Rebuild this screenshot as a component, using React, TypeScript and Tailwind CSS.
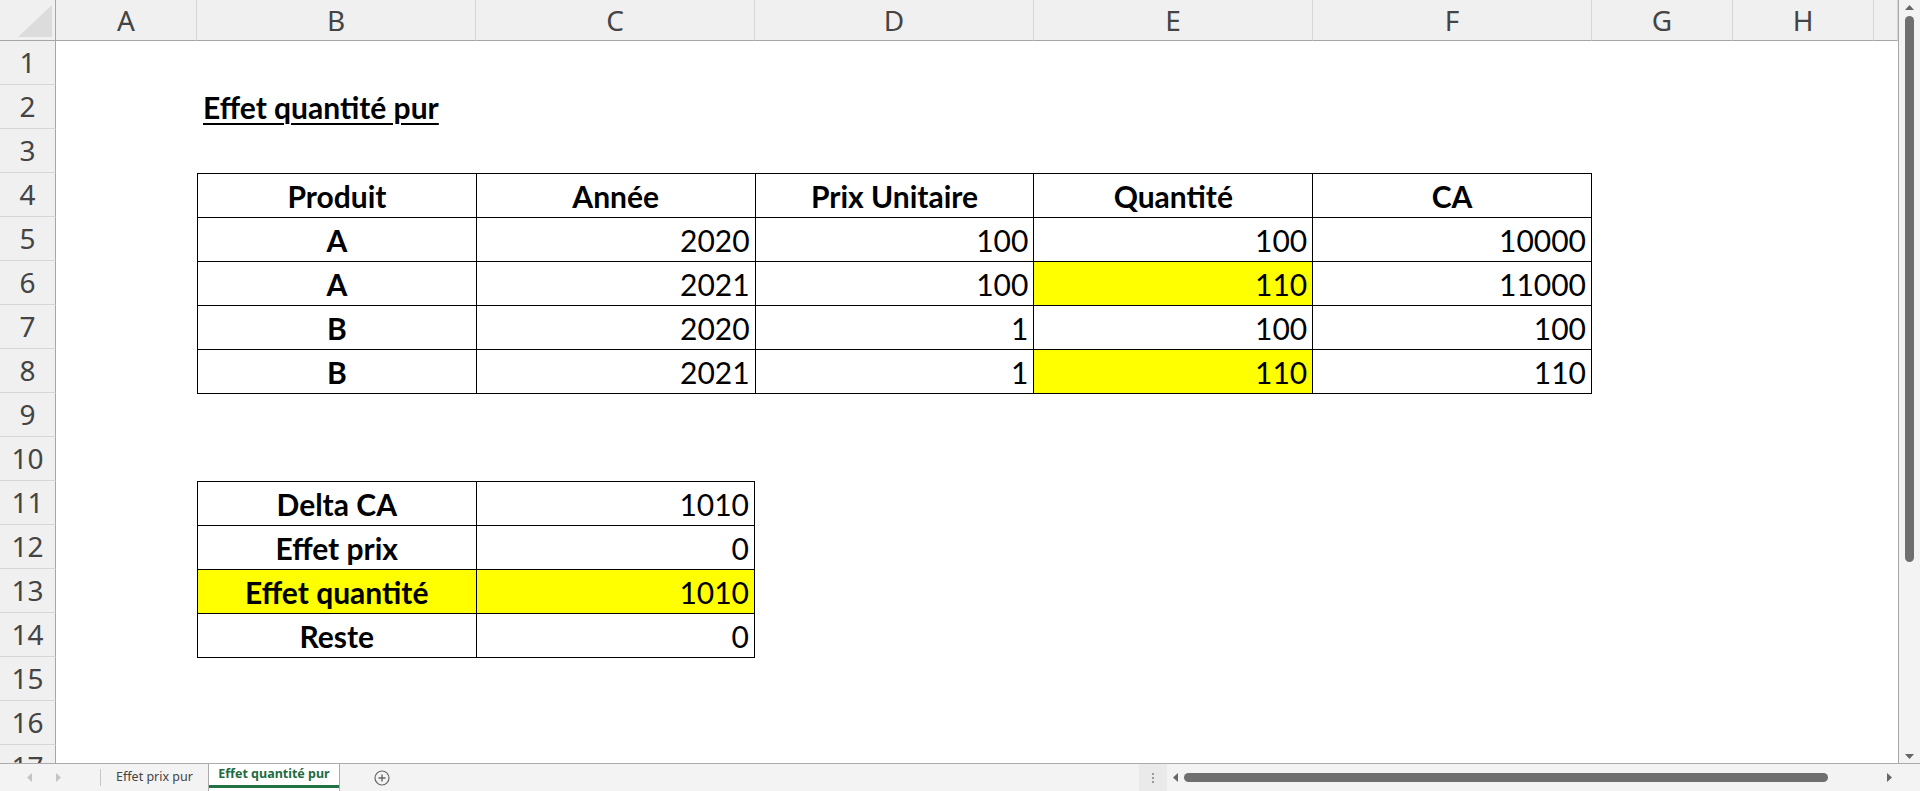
const COLUMNS = [
  { label: 'A', className: 'w-[141px]' },
  { label: 'B', className: 'w-[279px]' },
  { label: 'C', className: 'w-[279px]' },
  { label: 'D', className: 'w-[279px]' },
  { label: 'E', className: 'w-[279px]' },
  { label: 'F', className: 'w-[279px]' },
  { label: 'G', className: 'w-[141px]' },
  { label: 'H', className: 'w-[141px]' },
  { label: '', className: 'flex-1' },
];

const ROWS = Array.from({ length: 17 }, (_, i) => i + 1);

type Row = { cells: (string | number)[]; yellow?: number[] };

const SALES: Row[] = [
  { cells: ['A', 2020, 100, 100, 10000] },
  { cells: ['A', 2021, 100, 110, 11000], yellow: [3] },
  { cells: ['B', 2020, 1, 100, 100] },
  { cells: ['B', 2021, 1, 110, 110], yellow: [3] },
];

const SUMMARY: Row[] = [
  { cells: ['Delta CA', 1010] },
  { cells: ['Effet prix', 0] },
  { cells: ['Effet quantité', 1010], yellow: [0, 1] },
  { cells: ['Reste', 0] },
];

const td = 'h-[44px] border border-black p-0 px-[5px] leading-[42px] whitespace-nowrap';

function BodyRow({ row }: { row: Row }) {
  return (
    <tr>
      {row.cells.map((value, i) => (
        <td
          key={i}
          className={`${td} ${i === 0 ? 'text-center font-bold' : 'text-right'} ${
            row.yellow?.includes(i) ? 'bg-[#ffff00]' : ''
          }`}
        >
          {value}
        </td>
      ))}
    </tr>
  );
}

function Triangle({ dir }: { dir: 'up' | 'down' | 'left' | 'right' }) {
  const points = {
    up: '0,5 4.5,0 9,5',
    down: '0,0 9,0 4.5,5',
    left: '5,0 5,9 0,4.5',
    right: '0,0 5,4.5 0,9',
  }[dir];
  const vertical = dir === 'up' || dir === 'down';
  return (
    <svg width={vertical ? 9 : 5} height={vertical ? 5 : 9} viewBox={vertical ? '0 0 9 5' : '0 0 5 9'}>
      <polygon points={points} fill="#666" />
    </svg>
  );
}

function NavArrow({ dir }: { dir: 'left' | 'right' }) {
  return (
    <svg width="5" height="9" viewBox="0 0 5 9">
      <polygon points={dir === 'left' ? '5,0 5,9 0,4.5' : '0,0 5,4.5 0,9'} fill="#c4c4c4" />
    </svg>
  );
}

function Sheet() {
  return (
    <div className="h-[763px] flex-1 overflow-hidden border-r border-[#a6a6a6] bg-white">
      {/* column headers */}
      <div className="flex h-[41px] bg-[#f0f0f0] font-['Noto_Sans',sans-serif] text-[28px] leading-[40px] text-[#444]">
        <div className="w-[56px] shrink-0 border-r border-b border-[#a6a6a6]">
          <svg width="55" height="40" viewBox="0 0 55 40">
            <polygon points="52,5 52,37 18,37" fill="#dcdcdc" />
          </svg>
        </div>
        {COLUMNS.map((col, i) => (
          <div
            key={i}
            className={`${col.className} shrink-0 border-r border-b border-r-[#d6d6d6] border-b-[#a6a6a6] text-center`}
          >
            {col.label}
          </div>
        ))}
      </div>

      <div className="flex">
        {/* row numbers */}
        <div className="flex w-[56px] shrink-0 flex-col bg-[#f0f0f0] font-['Noto_Sans',sans-serif] text-[28px] leading-[43px] text-[#444]">
          {ROWS.map((n) => (
            <div key={n} className="h-[44px] shrink-0 border-r border-b border-r-[#a6a6a6] border-b-[#d6d6d6] text-center">
              {n}
            </div>
          ))}
        </div>

        {/* cells */}
        <div className="grid flex-1 grid-cols-[141px_279px_279px_279px_279px_279px_141px_141px_24px] grid-rows-[repeat(17,44px)] font-['Lato',sans-serif] text-[30px] text-black">
          <div className="col-start-2 row-start-2 px-[6px] leading-[44px] font-bold whitespace-nowrap">
            <span className="underline decoration-2 underline-offset-[4px]">Effet quantité pur</span>
          </div>

          <table className="col-span-5 col-start-2 row-span-5 row-start-4 w-full table-fixed border-collapse self-start">
            <tbody>
              <tr>
                {['Produit', 'Année', 'Prix Unitaire', 'Quantité', 'CA'].map((h) => (
                  <td key={h} className={`${td} text-center font-bold`}>
                    {h}
                  </td>
                ))}
              </tr>
              {SALES.map((row, i) => (
                <BodyRow key={i} row={row} />
              ))}
            </tbody>
          </table>

          <table className="col-span-2 col-start-2 row-span-4 row-start-11 w-full table-fixed border-collapse self-start">
            <tbody>
              {SUMMARY.map((row, i) => (
                <BodyRow key={i} row={row} />
              ))}
            </tbody>
          </table>
        </div>
      </div>
    </div>
  );
}

function VerticalScroll() {
  return (
    <div className="flex h-[763px] w-[21px] shrink-0 flex-col items-center bg-[#f3f3f3] pt-[5px] pb-[4px]">
      <Triangle dir="up" />
      <div className="mt-[6px] h-[546px] w-[9px] rounded-full bg-[#6f6f6f]" />
      <div className="flex-1" />
      <Triangle dir="down" />
    </div>
  );
}

function TabBar() {
  return (
    <div className="flex h-[28px] items-stretch border-t border-[#ababab] bg-[#f3f3f3] font-['Noto_Sans',sans-serif] text-[12.5px]">
      <div className="flex w-[100px] items-center pl-[27px]">
        <NavArrow dir="left" />
        <div className="w-[24px]" />
        <NavArrow dir="right" />
      </div>
      <div className="my-[5px] w-px bg-[#c6c6c6]" />
      <div className="flex w-[107px] items-center justify-center text-[#444]">Effet prix pur</div>
      <div className="flex w-[132px] flex-col border-x border-[#ababab] bg-white">
        <div className="flex flex-1 items-center justify-center font-bold text-[#1d6b40]">Effet quantité pur</div>
        <div className="mb-[3px] h-[3px] bg-[#217346]" />
      </div>
      <div className="flex w-[84px] items-center justify-center">
        <svg width="16" height="16" viewBox="0 0 16 16">
          <circle cx="8" cy="8" r="7" fill="none" stroke="#666" strokeWidth="1.2" />
          <path d="M8 4.5v7M4.5 8h7" stroke="#666" strokeWidth="1.4" />
        </svg>
      </div>
      <div className="flex-1" />
      <div className="flex w-[28px] flex-col items-center justify-center gap-[2px] bg-[#eaeaea]">
        <div className="h-[2px] w-[2px] bg-[#999]" />
        <div className="h-[2px] w-[2px] bg-[#999]" />
        <div className="h-[2px] w-[2px] bg-[#999]" />
      </div>
      <div className="flex w-[731px] items-center">
        <div className="flex w-[17px] justify-center">
          <Triangle dir="left" />
        </div>
        <div className="h-[9px] w-[644px] rounded-full bg-[#6f6f6f]" />
        <div className="flex-1" />
        <div className="flex w-[17px] justify-center">
          <Triangle dir="right" />
        </div>
      </div>
      <div className="w-[22px]" />
    </div>
  );
}

export default function App() {
  return (
    <div className="flex h-[791px] w-[1920px] flex-col overflow-hidden bg-white">
      <div className="flex">
        <Sheet />
        <VerticalScroll />
      </div>
      <TabBar />
    </div>
  );
}
